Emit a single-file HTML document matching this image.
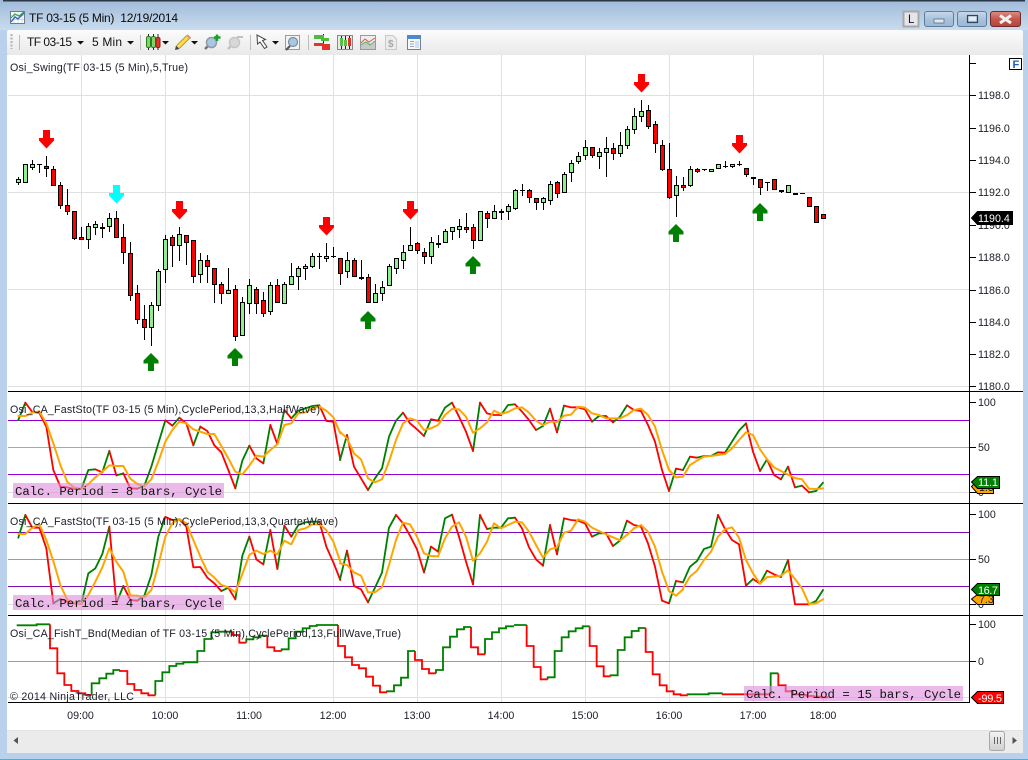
<!DOCTYPE html>
<html><head><meta charset="utf-8"><title>TF 03-15 (5 Min) 12/19/2014</title>
<style>
html,body{margin:0;padding:0;background:#fff;width:1028px;height:760px;overflow:hidden}
svg{display:block;position:absolute;left:0;top:0}
text{font-family:"Liberation Sans",Arial,sans-serif;font-size:10.67px;fill:#1c1c28}
.m{font-family:"Liberation Mono","Courier New",monospace;font-size:12.33px;fill:#111;letter-spacing:0}
.w{fill:#fff}
.f{fill:none;stroke-width:5.5;stroke-linejoin:round;stroke-linecap:round}
.g{stroke:#008000}.r{stroke:#ff0000}.o{stroke:#ffa500;stroke-width:6}
</style></head><body>
<svg width="1028" height="760" viewBox="0 0 1028 760" xmlns="http://www.w3.org/2000/svg">
<defs>
<linearGradient id="tb" x1="0" y1="0" x2="0" y2="1"><stop offset="0" stop-color="#9fbad9"/><stop offset="1" stop-color="#c9dcee"/></linearGradient>
<linearGradient id="tool" x1="0" y1="0" x2="0" y2="1"><stop offset="0" stop-color="#fbfbfb"/><stop offset="1" stop-color="#e9e9e9"/></linearGradient>
<linearGradient id="btn" x1="0" y1="0" x2="0" y2="1"><stop offset="0" stop-color="#c9d9ea"/><stop offset=".5" stop-color="#a9c2dc"/><stop offset="1" stop-color="#9cb8d6"/></linearGradient>
<linearGradient id="cl" x1="0" y1="0" x2="0" y2="1"><stop offset="0" stop-color="#dc8f84"/><stop offset=".5" stop-color="#c4574c"/><stop offset="1" stop-color="#b6443a"/></linearGradient>
<linearGradient id="th" x1="0" y1="0" x2="0" y2="1"><stop offset="0" stop-color="#f4f4f4"/><stop offset="1" stop-color="#cfcfcf"/></linearGradient>
<path id="dn" d="M-3.500 0H3.500V8H7.500V10.500L0 18.500L-7.500 10.500V8H-3.500Z"/>
<path id="up" d="M0 0L7.500 7.500V10.500H3V18H-3V10.500H-7.500V7.500Z"/>
</defs>

<!-- window chrome -->
<rect width="1028" height="760" fill="#b9d1ea"/>
<rect width="1028" height="30" fill="url(#tb)"/>
<rect x="3" y="0" width="1022" height="1.500" fill="#2b3743"/>
<rect x="0" y="759" width="1028" height="1" fill="#22c3dc"/>
<rect x="7" y="30" width="1016" height="25" rx="2" fill="url(#tool)"/>
<rect x="7" y="55" width="1016" height="698" fill="#fff"/>
<rect x="7" y="730" width="1016" height="23" fill="#ebebeb"/>
<rect x="7" y="730" width="1016" height="1" fill="#e2e2e2"/>

<!-- title -->
<g>
<rect x="10.500" y="11.500" width="14" height="12" fill="#fff" stroke="#6d7c8a"/>
<path d="M14 12V23M18 12V23M22 12V23M11 15.500H24M11 19.500H24" stroke="#c8cfd6" stroke-width=".7" fill="none"/>
<path d="M11 22L15 17L18 19L24 13" stroke="#2a6bc8" stroke-width="1.400" fill="none"/>
<path d="M11 18L15 14L19 16L24 12" stroke="#35a04a" stroke-width="1.200" fill="none"/>
</g>
<text x="29" y="22" textLength="149" lengthAdjust="spacing" style="font-size:12px;fill:#0c0c0c">TF 03-15 (5 Min)&#160; 12/19/2014</text>

<!-- window buttons -->
<rect x="903.500" y="11.500" width="15" height="15" fill="#e6e6e6" stroke="#a8a8a8" stroke-width="2"/>
<text x="908" y="23" style="font-size:11.500px;fill:#10105a">L</text>
<rect x="924.500" y="11.500" width="29" height="15" rx="2.500" fill="url(#btn)" stroke="#5f7c9c"/>
<rect x="934" y="19" width="10" height="4" fill="#e4e8ec" stroke="#5b6f86" stroke-width=".8"/>
<rect x="957.500" y="11.500" width="29" height="15" rx="2.500" fill="url(#btn)" stroke="#5f7c9c"/>
<rect x="967.500" y="15.500" width="10" height="7" fill="none" stroke="#2f4560" stroke-width="1.200"/>
<rect x="969" y="17" width="7" height="3.500" fill="#e8edf2" stroke="#e8edf2" stroke-width=".6"/>
<rect x="990.500" y="11.500" width="30" height="15" rx="2.500" fill="url(#cl)" stroke="#6e2a2a"/>
<path d="M1000 15.500L1011 23M1011 15.500L1000 23" stroke="#f1f1f1" stroke-width="3"/>

<!-- toolbar -->
<path d="M11.500 34V49" stroke="#b0b0b0" stroke-width="2" stroke-dasharray="2 1.500"/>
<path d="M19.500 35V50M140.500 35V50M250.500 35V50M308.500 35V50" stroke="#bcbcbc"/>
<text x="27" y="46" textLength="45" style="font-size:12px;fill:#111">TF 03-15</text>
<text x="92" y="46" textLength="30" style="font-size:12px;fill:#111">5 Min</text>
<path d="M77 41h7l-3.500 3.500zM127 41h7l-3.500 3.500zM162 41h7l-3.500 3.500zM191 41h7l-3.500 3.500zM272 41h7l-3.500 3.500z" fill="#111"/>
<!-- candle icon -->
<path d="M148.500 34V50M153.500 34V50M158 34V50" stroke="#222"/>
<rect x="146.500" y="36.500" width="4" height="11" rx="1.500" fill="#7fd46c" stroke="#2f7a25"/>
<rect x="151.500" y="36.500" width="4" height="11" rx="1.500" fill="#7fd46c" stroke="#2f7a25"/>
<rect x="156" y="37.500" width="4" height="10" rx="1.500" fill="#e5352c" stroke="#8d2018"/>
<!-- pencil -->
<path d="M178 47L188 37" stroke="#c79a1e" stroke-width="5"/>
<path d="M178 47L188 37" stroke="#f8dd55" stroke-width="3"/>
<path d="M175 50l1-4.500 3.500 3.500z" fill="#444"/>
<path d="M187 35l3.500 3.500" stroke="#e48c8c" stroke-width="2"/>
<!-- zoom in -->
<path d="M205 49L209 45" stroke="#6d7780" stroke-width="2.500"/>
<circle cx="211.500" cy="42.500" r="5" fill="#a9c7e4" stroke="#8f9aa4" stroke-width="1.500"/>
<path d="M217 34.500V41M214 37.500H220.500" stroke="#18a02c" stroke-width="2.500"/>
<!-- zoom out -->
<path d="M228 49L232 45" stroke="#c2c2c2" stroke-width="2.500"/>
<circle cx="234.500" cy="42.500" r="5" fill="#d8d8d8" stroke="#c6c6c6" stroke-width="1.500"/>
<path d="M237 37H243" stroke="#c2c2c2" stroke-width="2"/>
<!-- cursor -->
<path d="M257 35L257.500 44L260 42L264.500 48.500L267 47L262.500 40.500L265.500 39.500Z" fill="#fff" stroke="#444"/>
<!-- zoom box -->
<rect x="285.500" y="35.500" width="14" height="14" fill="#f4f4f4" stroke="#9a9a9a"/>
<path d="M286 50L290 46" stroke="#555" stroke-width="2"/>
<circle cx="293" cy="42" r="4.500" fill="#a9c7e4" stroke="#7d8b98" stroke-width="1.200"/>
<!-- bars/markers -->
<path d="M323.500 34V50" stroke="#222"/>
<rect x="314" y="35" width="10" height="4" fill="#4dbb3b"/><rect x="321" y="38" width="8" height="3" fill="#4dbb3b"/>
<rect x="314" y="43" width="10" height="3" fill="#e0352c"/><rect x="322" y="44" width="8" height="6" fill="#e0352c"/>
<!-- chart style -->
<rect x="337.500" y="35.500" width="15" height="14" fill="#e9e9e9" stroke="#8a8a8a"/>
<path d="M341.500 36V49M345.500 36V49M349.500 36V49" stroke="#222"/>
<rect x="340" y="38" width="3" height="8" fill="#57c048"/><rect x="344" y="40" width="3" height="6" fill="#57c048"/><rect x="348" y="38" width="3" height="8" fill="#e0352c"/>
<!-- indicators -->
<rect x="360.500" y="35.500" width="15" height="14" fill="#eeeeee" stroke="#9a9a9a"/>
<path d="M361 48V44L366 41L371 44L375 41V49H361Z" fill="#c8c8c8"/>
<path d="M361 43L365 39L369 42L375 38" stroke="#e0564e" fill="none"/>
<path d="M361 45L366 42L370 45L375 41" stroke="#5fb860" fill="none"/>
<!-- strategy -->
<path d="M385.500 35.500H393L396.500 39V49.500H385.500Z" fill="#ececec" stroke="#c8c8c8"/>
<text x="388" y="47" style="font-size:10px;fill:#a8a8a8;font-weight:bold">$</text>
<!-- properties -->
<rect x="407.500" y="35.500" width="13" height="14" fill="#f7f7f7" stroke="#6f7f9f"/>
<rect x="408" y="36" width="12" height="3" fill="#4a8bd0"/>
<path d="M410 41.500H414M410 44H414M410 46.500H414" stroke="#9aa4b8"/>
<rect x="415" y="41" width="4" height="7" fill="#cfe0f2"/>

<!-- grid -->
<path d="M81.500 55V702M165.500 55V702M249.500 55V702M333.500 55V702M417.500 55V702M501.500 55V702M585.500 55V702M669.500 55V702M753.500 55V702M823.500 55V702" stroke="#e0e0e0"/>
<path d="M8 95.500H969M8 192.500H969M8 289.500H969M8 386.500H969M8 492.500H969M8 604.500H969M8 697.500H969" stroke="#e0e0e0"/>
<path d="M8 420.500H969M8 474.500H969" stroke="#9400d3"/>
<path d="M8 532.500H969M8 586.500H969" stroke="#7d0fb0"/>
<path d="M8 447.500H969" stroke="#a9a9a9"/>
<path d="M8 559.500H969M8 661.500H969" stroke="#9c9c9c"/>

<!-- candles: wicks -->
<path stroke="#000" fill="none" d="M18.500 177V185M25.500 164V183M32.500 160V170M39.500 164V173M46.500 156V177M53.500 166V185M60.500 182V209M67.500 189V215M74.500 211V240M81.500 227V240M88.500 223V249M95.500 221V235M102.500 223V238M109.500 213V232M116.500 211V237M123.500 224V264M130.500 242V301M137.500 285V324M144.500 305V340M151.500 302V346M158.500 269V311M165.500 235V283M172.500 235V267M179.500 227V261M186.500 235V265M193.500 240V283M200.500 253V283M207.500 255V283M214.500 268V303M221.500 282V304M228.500 268V293M235.500 285V341M242.500 297V336M249.500 279V314M256.500 287V314M263.500 292V317M270.500 282V315M277.500 279V303M284.500 282V303M291.500 263V284M298.500 266V290M305.500 264V280M312.500 253V268M319.500 253V269M326.500 243V262M333.500 247V258M340.500 258V285M347.500 252V278M354.500 258V277M361.500 260V280M368.500 274V303M375.500 284V302M382.500 281V301M389.500 264V285M396.500 258V274M403.500 245V269M410.500 227V250M417.500 242V254M424.500 248V264M431.500 237V264M438.500 235V248M445.500 229V243M452.500 227V240M459.500 219V238M466.500 213V233M473.500 224V249M480.500 211V240M487.500 211V228M494.500 205V218M501.500 209V220M508.500 204V220M515.500 189V210M522.500 184V196M529.500 189V203M536.500 198V210M543.500 197V210M550.500 181V205M557.500 181V198M564.500 172V192M571.500 160V182M578.500 152V164M585.500 140V160M592.500 147V158M599.500 148V169M606.500 137V177M613.500 143V160M620.500 132V157M627.500 126V149M634.500 108V134M641.500 100V122M648.500 105V129M655.500 121V153M662.500 140V171M669.500 143V199M676.500 176V217M683.500 177V191M690.500 166V187M697.500 168V173M704.500 169V171M725.500 161V168M732.500 164V168M739.500 161V166M746.500 168V177M753.500 177V185M760.500 179V195M767.500 182V191M781.500 190V193M816.500 206V223"/>
<!-- dojis -->
<path stroke="#000" fill="none" d="M37 164.500h5M317 256.500h5M331 256.500h5M520 190.500h5M702 169.500h5M723 166.500h5M737 164.500h5M765 182.500h5M800 193.500h5"/>
<path stroke="#000" stroke-width="2" fill="none" d="M100 228h5M359 278h5M436 244h5M499 212h5M751 178h5M779 191h5M793 194h5"/>
<!-- red bodies -->
<path fill="#ff0000" stroke="#000" d="M44.500 166.500h4v2h-4zM51.500 169.500h4v16h-4zM58.500 185.500h4v20h-4zM65.500 205.500h4v6h-4zM72.500 211.500h4v27h-4zM79.500 237.500h4v2h-4zM114.500 218.500h4v19h-4zM121.500 237.500h4v15h-4zM128.500 253.500h4v42h-4zM135.500 293.500h4v26h-4zM142.500 319.500h4v8h-4zM170.500 237.500h4v8h-4zM184.500 235.500h4v7h-4zM191.500 240.500h4v36h-4zM205.500 260.500h4v6h-4zM212.500 268.500h4v16h-4zM219.500 284.500h4v9h-4zM233.500 289.500h4v47h-4zM254.500 289.500h4v14h-4zM261.500 300.500h4v13h-4zM275.500 285.500h4v17h-4zM338.500 258.500h4v15h-4zM352.500 260.500h4v16h-4zM366.500 277.500h4v25h-4zM415.500 243.500h4v7h-4zM422.500 252.500h4v4h-4zM464.500 227.500h4v2h-4zM471.500 227.500h4v13h-4zM485.500 213.500h4v5h-4zM527.500 190.500h4v7h-4zM534.500 198.500h4v4h-4zM555.500 182.500h4v11h-4zM590.500 147.500h4v8h-4zM611.500 148.500h4v5h-4zM646.500 110.500h4v16h-4zM653.500 124.500h4v19h-4zM660.500 145.500h4v24h-4zM667.500 169.500h4v28h-4zM681.500 185.500h4v2h-4zM695.500 169.500h4v2h-4zM744.500 168.500h4v6h-4zM758.500 179.500h4v8h-4zM772.500 179.500h4v10h-4zM807.500 197.500h4v9h-4zM814.500 206.500h4v16h-4zM821.500 214.500h4v4h-4z"/>
<!-- green bodies -->
<path fill="#90ee90" stroke="#000" d="M16.500 179.500h4v3h-4zM23.500 164.500h4v18h-4zM30.500 164.500h4v3h-4zM86.500 226.500h4v13h-4zM93.500 224.500h4v3h-4zM107.500 218.500h4v8h-4zM149.500 305.500h4v22h-4zM156.500 271.500h4v34h-4zM163.500 239.500h4v30h-4zM177.500 234.500h4v11h-4zM198.500 260.500h4v14h-4zM226.500 290.500h4v3h-4zM240.500 302.500h4v33h-4zM247.500 285.500h4v18h-4zM268.500 285.500h4v26h-4zM282.500 284.500h4v19h-4zM289.500 276.500h4v8h-4zM296.500 268.500h4v8h-4zM303.500 266.500h4v2h-4zM310.500 256.500h4v10h-4zM324.500 256.500h4v2h-4zM345.500 260.500h4v11h-4zM373.500 293.500h4v9h-4zM380.500 287.500h4v6h-4zM387.500 266.500h4v19h-4zM394.500 258.500h4v10h-4zM401.500 252.500h4v8h-4zM408.500 245.500h4v5h-4zM429.500 242.500h4v14h-4zM443.500 231.500h4v11h-4zM450.500 227.500h4v4h-4zM457.500 226.500h4v3h-4zM478.500 211.500h4v29h-4zM492.500 211.500h4v7h-4zM506.500 206.500h4v5h-4zM513.500 190.500h4v18h-4zM541.500 198.500h4v4h-4zM548.500 184.500h4v16h-4zM562.500 174.500h4v18h-4zM569.500 163.500h4v9h-4zM576.500 156.500h4v5h-4zM583.500 147.500h4v8h-4zM597.500 152.500h4v4h-4zM604.500 148.500h4v4h-4zM618.500 145.500h4v8h-4zM625.500 129.500h4v16h-4zM632.500 116.500h4v13h-4zM639.500 111.500h4v5h-4zM674.500 185.500h4v10h-4zM688.500 169.500h4v16h-4zM709.500 169.500h4v2h-4zM716.500 164.500h4v4h-4zM730.500 164.500h4v2h-4zM786.500 185.500h4v7h-4z"/>
<!-- arrows -->
<g fill="#ff0000">
<use href="#dn" x="46.500" y="130"/><use href="#dn" x="179.500" y="201"/><use href="#dn" x="326.500" y="217"/><use href="#dn" x="410.500" y="201"/><use href="#dn" x="641.500" y="74"/><use href="#dn" x="739.500" y="135"/>
</g>
<use href="#dn" x="116.500" y="185" fill="#00ffff"/>
<g fill="#008000">
<use href="#up" x="151" y="353"/><use href="#up" x="235" y="348"/><use href="#up" x="368" y="311"/><use href="#up" x="473" y="256"/><use href="#up" x="676" y="224"/><use href="#up" x="760" y="203"/>
</g>

<!-- PANEL 1 -->
<g transform="translate(0 390) scale(.33333)">
<path class="f g" d="M55 90L76 38M244 297L265 240L286 238M307 247L328 183M349 256L370 250M412 296L433 287L454 230L475 160L496 91M517 107L538 83M580 166L601 110M706 295L727 212L748 167M790 220L811 105M832 162L853 60M874 85L895 62L916 55L937 48L958 46"/>
<path class="f r" d="M76 38L97 66L118 68L139 110L160 240L181 290L202 292L223 297L244 297M286 238L307 247M328 183L349 256M370 250L391 295L412 296M496 91L517 107M538 83L559 100L580 166M601 110L622 123L643 166L664 187L685 240L706 295M748 167L769 205L790 220M811 105L832 162M853 60L874 85M958 46L979 93L1000 95L1021 210"/>
<path class="f o" d="M55 78L76 78L97 68L118 64L139 100L160 160L181 225L202 276L223 293L244 297L265 283L286 262L307 245L328 226L349 228L370 228L391 266L412 282L433 289L454 268L475 215L496 155L517 120L538 95L559 100L580 118L601 125L622 132L643 132L664 168L685 205L706 245L727 253L748 227L769 197L790 200L811 180L832 163L853 105L874 100L895 70L916 67L937 55L958 50L979 62L1000 82L1021 130"/>
</g>
<g transform="translate(340 390) scale(.33333)">
<path class="f g" d="M0 210L21 135M84 300L105 265L126 235L147 140L168 92L189 68M252 138L273 88M294 92L315 53L336 38M399 183L420 38M483 75L504 45L525 43M588 120L609 108L630 56M651 127L672 47M756 95L777 78L798 78M819 97L840 80L861 46M987 303L1008 236"/>
<path class="f r" d="M21 135L42 230L63 265L84 300M189 68L210 100L231 118L252 138M273 88L294 92M336 38L357 80L378 125L399 183M420 38L441 70L462 75L483 75M525 43L546 65L567 90L588 120M630 56L651 127M672 47L693 52L714 52L735 58L756 95M798 78L819 97M861 46L882 60L903 63L924 105L945 155L966 240L987 303M1008 236L1029 240"/>
<path class="f o" d="M0 125L21 145L42 190L63 208L84 265L105 277L126 268L147 215L168 150L189 100L210 85L231 92L252 120L273 115L294 105L315 75L336 57L357 58L378 80L399 128L420 115L441 97L462 62L483 72L504 66L525 55L546 52L567 68L588 92L609 105L630 95L651 96L672 77L693 74L714 50L735 53L756 70L777 75L798 85L819 85L840 85L861 75L882 60L903 56L924 75L945 110L966 180L987 240L1008 262L1029 260"/>
</g>
<g transform="translate(680 390) scale(.33333)">
<path class="f g" d="M9 240L30 200M51 203L72 198L93 198L114 187M135 188L156 155L177 122L198 100M240 243L261 208M303 268L324 230M345 292L366 287M387 307L408 303L429 278"/>
<path class="f r" d="M30 200L51 203M114 187L135 188M198 100L219 185L240 243M261 208L282 255L303 268M324 230L345 292M366 287L387 307"/>
<path class="f o" d="M9 260L30 225L51 212L72 200L93 198L114 195L135 192L156 175L177 150L198 127L219 135L240 178L261 208L282 232L303 243L324 254L345 264L366 268L387 296L408 297L429 295"/>
</g>

<!-- PANEL 2 -->
<g transform="translate(0 505) scale(.33333)">
<path class="f g" d="M55 98L76 30M160 295L181 282M244 297L265 205L286 190L307 147L328 65M349 295L370 243M412 287L433 272L454 210L475 95L496 36M517 45L538 43M664 258L685 248M706 283L727 152L748 95M790 178L811 75M832 192L853 62M874 95L895 60L916 52L937 50L958 50"/>
<path class="f r" d="M76 30L97 68L118 68L139 130L160 295M181 282L202 290L223 295L244 297M328 65L349 295M370 243L391 285L412 287M496 36L517 45M538 43L559 65L580 187L601 186L622 218L643 235L664 258M685 248L706 283M748 95L769 163L790 178M811 75L832 192M853 62L874 95M958 50L979 125L1000 172L1021 225"/>
<path class="f o" d="M55 87L76 87L97 68L118 58L139 105L160 168L181 240L202 285L223 293L244 297L265 270L286 230L307 187L328 130L349 170L370 200L391 272L412 272L433 277L454 255L475 180L496 95L517 55L538 42L559 55L580 105L601 155L622 200L643 218L664 240L685 247L706 262L727 207L748 150L769 137L790 147L811 137L832 148L853 107L874 118L895 75L916 70L937 58L958 58L979 75L1000 110L1021 170"/>
</g>
<g transform="translate(340 505) scale(.33333)">
<path class="f g" d="M0 223L21 137M84 292L105 248L126 203L147 68L168 30M252 202L273 125M294 140L315 40L336 29M399 238L420 30M441 72L462 68L483 68L504 40L525 38M609 182L630 60M651 148L672 40M756 95L777 85L798 85M819 123L840 107L861 47M987 295L1008 228"/>
<path class="f r" d="M21 137L42 243L63 253L84 292M168 30L189 55L210 92L231 133L252 202M273 125L294 140M336 29L357 95L378 170L399 238M420 30L441 72M525 38L546 70L567 127L588 163L609 182M630 60L651 148M672 40L693 45L714 47L735 55L756 95M798 85L819 123M861 47L882 60L903 65L924 115L945 185L966 287L987 295M1008 228L1029 232"/>
<path class="f o" d="M0 175L21 180L42 202L63 212L84 262L105 262L126 247L147 180L168 105L189 53L210 58L231 95L252 145L273 153L294 154L315 100L336 65L357 52L378 95L399 167L420 145L441 110L462 55L483 70L504 60L525 50L546 52L567 80L588 120L609 158L630 133L651 127L672 83L693 77L714 43L735 50L756 68L777 78L798 88L819 97L840 106L861 90L882 70L903 60L924 80L945 125L966 200L987 258L1008 272L1029 253"/>
</g>
<g transform="translate(514 505) scale(.33333)">
<path class="f g" d="M507 232L528 185L549 168L570 132L591 125L612 30M696 242L717 222M738 236L759 197M801 216L822 165M885 298L906 288L927 255"/>
<path class="f r" d="M612 30L633 72L654 105L675 118L696 242M717 222L738 236M759 197L780 208L801 216M822 165L843 298L864 298L885 298"/>
<path class="f o" d="M507 250L528 215L549 197L570 165L591 140L612 95L633 73L654 67L675 98L696 165L717 205L738 236L759 216L780 215L801 212L822 196L843 222L864 250L885 297L906 295L927 283"/>
</g>

<!-- PANEL 3 -->
<g transform="translate(0 615) scale(.33333)">
<path class="f g" style="stroke-linejoin:miter;stroke-linecap:butt" d="M50 31H110V28H150M275 240V205H298V190H319V176H340V165H360M466 241V198H487V172H508V153H529V146H550V142H592V108H613V72H634V52H655V50H697M739 83V73H760V67H781V62H802M845 108V103H866V70H887V50H908V40H929V33H950V30H1014M1161 232V229H1182V211H1203V188H1224V108H1245M1308 175V165H1329V97H1350V65H1371V43H1392V36H1413M1455 118V72H1476V52H1497V40H1518V34H1542"/>
<path class="f r" style="stroke-linejoin:miter;stroke-linecap:butt" d="M150 28V100H172V175H193V210H214V228H235V235H256V240H275M360 165V168H382V207H403V225H424V235H445V241H466M697 50V60H718V83H739M802 62V97H823V108H845M1014 30V93H1035V127H1056V150H1077V160H1098V185H1119V212H1140V232H1161M1245 108V135H1266V162H1287V175H1308M1413 36V97H1434V118H1455"/>
</g>
<g transform="translate(514 505) scale(.33333)">
<path class="f g" style="stroke-linejoin:miter;stroke-linecap:butt" d="M0 360H38M101 523V517H122V438H143V397H164V379H185V370H206V364H227M290 514V511H311V435H332V397H353V378H374V369H395M521 571V568H584V565H626M770 568V505H793"/>
<path class="f r" style="stroke-linejoin:miter;stroke-linecap:butt" d="M38 360V423H59V486H80V523H101M227 364V423H248V484H269V514H290M395 369V441H416V508H437V541H458V559H479V568H500V571H521M626 565V568H770M793 505V541H815V559H836V568H857V570H878V573H899V575H920V577H943"/>
</g>

<!-- frame lines -->
<path d="M8 391.500H1023M8 503.500H1023M8 615.500H1023M8 702.500H969.500M969.500 55V703" stroke="#000"/>

<!-- highlights -->
<rect x="13" y="483" width="211" height="15" fill="#e08cdc" fill-opacity=".6"/>
<rect x="13" y="595" width="211" height="15" fill="#e08cdc" fill-opacity=".6"/>
<rect x="744" y="686" width="219" height="15" fill="#e08cdc" fill-opacity=".6"/>
<text class="m" x="15" y="495" textLength="207">Calc. Period = 8 bars, Cycle</text>
<text class="m" x="15" y="607" textLength="207">Calc. Period = 4 bars, Cycle</text>
<text class="m" x="746" y="698" textLength="215">Calc. Period = 15 bars, Cycle</text>

<!-- panel labels -->
<text x="10" y="71" textLength="178">Osi_Swing(TF 03-15 (5 Min),5,True)</text>
<text x="10" y="413" textLength="310">Osi_CA_FastSto(TF 03-15 (5 Min),CyclePeriod,13,3,HalfWave)</text>
<text x="10" y="525" textLength="328">Osi_CA_FastSto(TF 03-15 (5 Min),CyclePeriod,13,3,QuarterWave)</text>
<text x="10" y="637" textLength="391">Osi_CA_FishT_Bnd(Median of TF 03-15 (5 Min),CyclePeriod,13,FullWave,True)</text>
<text x="10" y="700" textLength="124">© 2014 NinjaTrader, LLC</text>

<!-- y axis ticks -->
<path d="M970 63.500H976M970 95.500H976M970 128.500H976M970 160.500H976M970 192.500H976M970 225.500H976M970 257.500H976M970 290.500H976M970 322.500H976M970 354.500H976M970 386.500H976M970 402.500H976M970 447.500H976M970 492.500H976M970 514.500H976M970 559.500H976M970 604.500H976M970 624.500H976M970 661.500H976" stroke="#000"/>
<g>
<text x="978" y="99">1198.0</text><text x="978" y="132">1196.0</text><text x="978" y="164">1194.0</text><text x="978" y="196">1192.0</text><text x="978" y="229">1190.0</text><text x="978" y="261">1188.0</text><text x="978" y="294">1186.0</text><text x="978" y="326">1184.0</text><text x="978" y="358">1182.0</text><text x="978" y="390">1180.0</text>
<text x="978" y="406">100</text><text x="978" y="451">50</text><text x="978" y="496">0</text>
<text x="978" y="518">100</text><text x="978" y="563">50</text><text x="978" y="608">0</text>
<text x="978" y="628">100</text><text x="978" y="665">0</text>
</g>

<!-- F box -->
<rect x="1009.500" y="58.500" width="12" height="11" fill="#fff" stroke="#000"/>
<text x="1012.500" y="68" style="font-size:11px;fill:#1d5fb0;font-weight:bold">F</text>

<!-- value flags -->
<path d="M971.500 218L977.500 211.500H1012.500V224.500H977.500Z" fill="#000" stroke="#000"/>
<text class="w" x="978" y="222" style="fill:#fff">1190.4</text>
<path d="M971.500 486.500L977.500 480.500H993.500V493.500H977.500Z" fill="#ffa500" stroke="#000"/>
<text x="979" y="491" style="fill:#222">1.3</text>
<path d="M971.500 482L977.500 476.500H999.500V488.500H977.500Z" fill="#008000" stroke="#000"/>
<text x="978" y="486" textLength="20" style="fill:#fff;font-size:11px">11.1</text>
<path d="M971.500 599L977.500 594.500H993.500V604.500H977.500Z" fill="#ffa500" stroke="#000"/>
<text x="979" y="603" style="fill:#222">7.3</text>
<path d="M971.500 589.500L977.500 583.500H999.500V595.500H977.500Z" fill="#008000" stroke="#000"/>
<text x="978" y="594" textLength="20" style="fill:#fff;font-size:11px">16.7</text>
<path d="M971.500 697.500L977.500 691.500H1003.500V703.500H977.500Z" fill="#ff0000" stroke="#000"/>
<text x="978" y="702" textLength="24" style="fill:#fff;font-size:11px">-99.5</text>

<!-- time axis -->
<g text-anchor="middle">
<text x="80.500" y="719">09:00</text><text x="165" y="719">10:00</text><text x="249" y="719">11:00</text><text x="333" y="719">12:00</text><text x="417" y="719">13:00</text><text x="501" y="719">14:00</text><text x="585" y="719">15:00</text><text x="669" y="719">16:00</text><text x="753" y="719">17:00</text><text x="823" y="719">18:00</text>
</g>

<!-- scrollbar -->
<path d="M18 737V744L13.500 740.500Z" fill="#555"/>
<path d="M1012.500 737V744L1017 740.500Z" fill="#555"/>
<rect x="989.500" y="731.500" width="15" height="19" rx="2" fill="url(#th)" stroke="#a8a8a8"/>
<path d="M994.500 737V744M997.500 737V744M1000.500 737V744" stroke="#666"/>
</svg>
</body></html>
